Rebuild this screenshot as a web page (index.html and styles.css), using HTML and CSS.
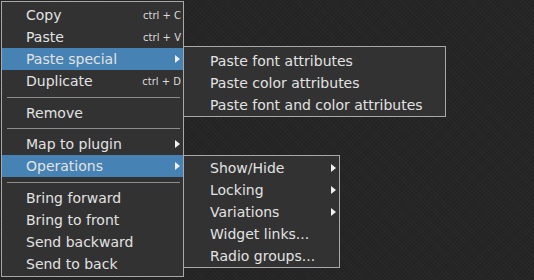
FILE: index.html
```html
<!DOCTYPE html>
<html>
<head>
<meta charset="utf-8">
<link rel="stylesheet" href="styles.css">
</head>
<body>
<div class="menu main">
  <div class="item"><span class="label">Copy</span><span class="sc">ctrl + C</span></div>
  <div class="item"><span class="label">Paste</span><span class="sc">ctrl + V</span></div>
  <div class="item active has-sub"><span class="label">Paste special</span><span class="arrow"></span>
    <div class="menu submenu sub-paste">
      <div class="item"><span class="label">Paste font attributes</span></div>
      <div class="item"><span class="label">Paste color attributes</span></div>
      <div class="item"><span class="label">Paste font and color attributes</span></div>
    </div>
  </div>
  <div class="item"><span class="label">Duplicate</span><span class="sc">ctrl + D</span></div>
  <div class="sep sep-wide"></div>
  <div class="item"><span class="label">Remove</span></div>
  <div class="sep"></div>
  <div class="item"><span class="label">Map to plugin</span><span class="arrow"></span></div>
  <div class="item active has-sub"><span class="label">Operations</span><span class="arrow"></span>
    <div class="menu submenu sub-ops">
      <div class="item"><span class="label">Show/Hide</span><span class="arrow"></span></div>
      <div class="item"><span class="label">Locking</span><span class="arrow"></span></div>
      <div class="item"><span class="label">Variations</span><span class="arrow"></span></div>
      <div class="item"><span class="label">Widget links...</span></div>
      <div class="item"><span class="label">Radio groups...</span></div>
    </div>
  </div>
  <div class="sep sep-wide"></div>
  <div class="item"><span class="label">Bring forward</span></div>
  <div class="item"><span class="label">Bring to front</span></div>
  <div class="item"><span class="label">Send backward</span></div>
  <div class="item"><span class="label">Send to back</span></div>
</div>
</body>
</html>
```

FILE: styles.css
```css
html, body {
  margin: 0;
  padding: 0;
  width: 534px;
  height: 280px;
  overflow: hidden;
}
body {
  background-color: #252525;
  background-image:
    repeating-linear-gradient(45deg, rgba(255,255,255,0.018) 0 1px, transparent 1px 3px),
    repeating-linear-gradient(-45deg, rgba(0,0,0,0.08) 0 1px, transparent 1px 3px);
  font-family: "DejaVu Sans", Verdana, sans-serif;
  font-size: 14px;
  color: #e2e2e2;
}
.menu {
  background: #323232;
  border: 1px solid #a8a8a8;
  box-sizing: border-box;
}
.main {
  margin: 1px 0 0 1px;
  width: 183px;
  padding: 2px 0 1px 0;
  position: relative;
}
.item {
  height: 22px;
  display: flex;
  align-items: center;
  padding: 0 2px 0 24px;
  position: relative;
  white-space: nowrap;
}
.item.active {
  background: #4682b4;
}
.label {
  flex: 1;
}
.sc {
  font-size: 10px;
  color: #dcdcdc;
}
.arrow {
  width: 0;
  height: 0;
  border-top: 4px solid transparent;
  border-bottom: 4px solid transparent;
  border-left: 5px solid #f0f0f0;
  margin-right: 1px;
}
.sep {
  height: 9px;
  box-sizing: border-box;
  padding: 4px 3px 0 5px;
}
.sep-wide {
  height: 10px;
  padding-top: 5px;
}
.sep::before {
  content: "";
  display: block;
  height: 1px;
  background: #8c8c8c;
}
.submenu {
  position: absolute;
  left: 181px;
}
.submenu .item {
  padding-left: 26px;
}
.sub-paste {
  top: -2px;
  width: 263px;
  padding: 3px 0 0 0;
}
.sub-ops {
  top: 0;
  width: 157px;
  padding: 1px 0 0 0;
}
```
